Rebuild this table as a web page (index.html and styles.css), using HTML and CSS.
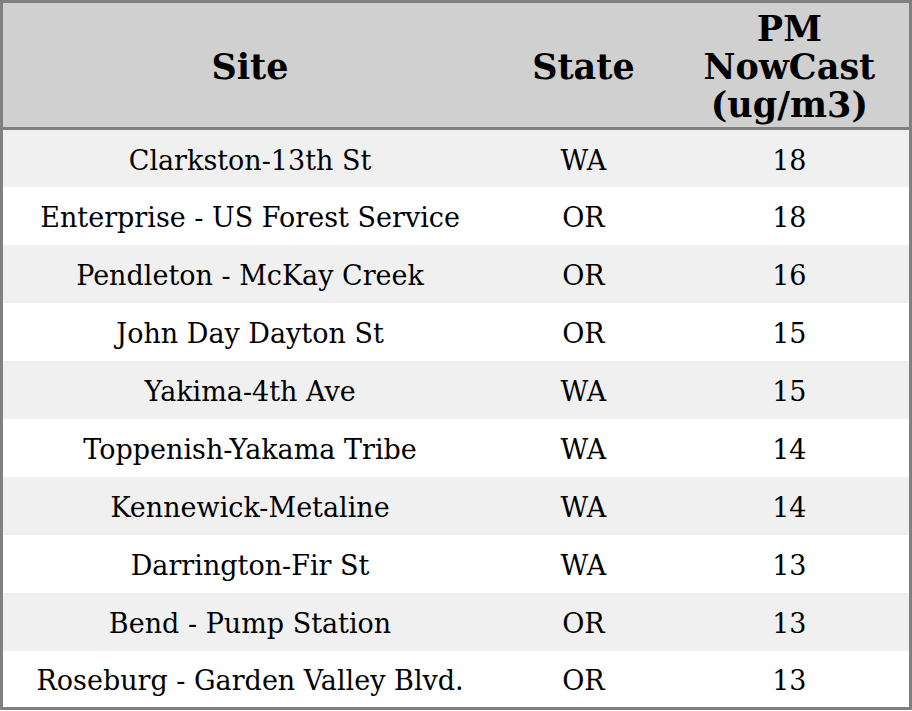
FILE: index.html
```html
<!DOCTYPE html>
<html>
<head>
<meta charset="utf-8">
<link rel="stylesheet" href="styles.css">
</head>
<body>
<table class="aq">
  <colgroup>
    <col class="c-site">
    <col class="c-state">
    <col class="c-pm">
  </colgroup>
  <thead>
    <tr><th>Site</th><th>State</th><th>PM<br>NowCast<br>(ug/m3)</th></tr>
  </thead>
  <tbody>
    <tr><td>Clarkston-13th St</td><td>WA</td><td>18</td></tr>
    <tr><td>Enterprise - US Forest Service</td><td>OR</td><td>18</td></tr>
    <tr><td>Pendleton - McKay Creek</td><td>OR</td><td>16</td></tr>
    <tr><td>John Day Dayton St</td><td>OR</td><td>15</td></tr>
    <tr><td>Yakima-4th Ave</td><td>WA</td><td>15</td></tr>
    <tr><td>Toppenish-Yakama Tribe</td><td>WA</td><td>14</td></tr>
    <tr><td>Kennewick-Metaline</td><td>WA</td><td>14</td></tr>
    <tr><td>Darrington-Fir St</td><td>WA</td><td>13</td></tr>
    <tr><td>Bend - Pump Station</td><td>OR</td><td>13</td></tr>
    <tr><td>Roseburg - Garden Valley Blvd.</td><td>OR</td><td>13</td></tr>
  </tbody>
</table>
</body>
</html>
```
FILE: styles.css
```css
html, body {
  margin: 0;
  padding: 0;
  background: #ffffff;
}
.aq {
  width: 912px;
  border-collapse: collapse;
  border: 3px solid #808080;
  font-family: "DejaVu Serif", serif;
  color: #000;
  table-layout: fixed;
}
.c-site { width: 494px; }
.c-state { width: 172px; }
.c-pm { width: 240px; }
.aq th {
  background: #d0d0d0;
  font-size: 35px;
  font-weight: bold;
  line-height: 38px;
  height: 127px;
  padding: 4px 0 0;
  box-sizing: border-box;
  text-align: center;
  vertical-align: middle;
  border-bottom: 3px solid #808080;
}
.aq td {
  font-size: 27px;
  line-height: 30px;
  height: 58px;
  padding: 5px 0 0;
  box-sizing: border-box;
  text-align: center;
  vertical-align: middle;
}
.aq tbody tr:nth-child(odd) td { background: #f0f0f0; }
.aq tbody tr:nth-child(even) td { background: #ffffff; }
```
